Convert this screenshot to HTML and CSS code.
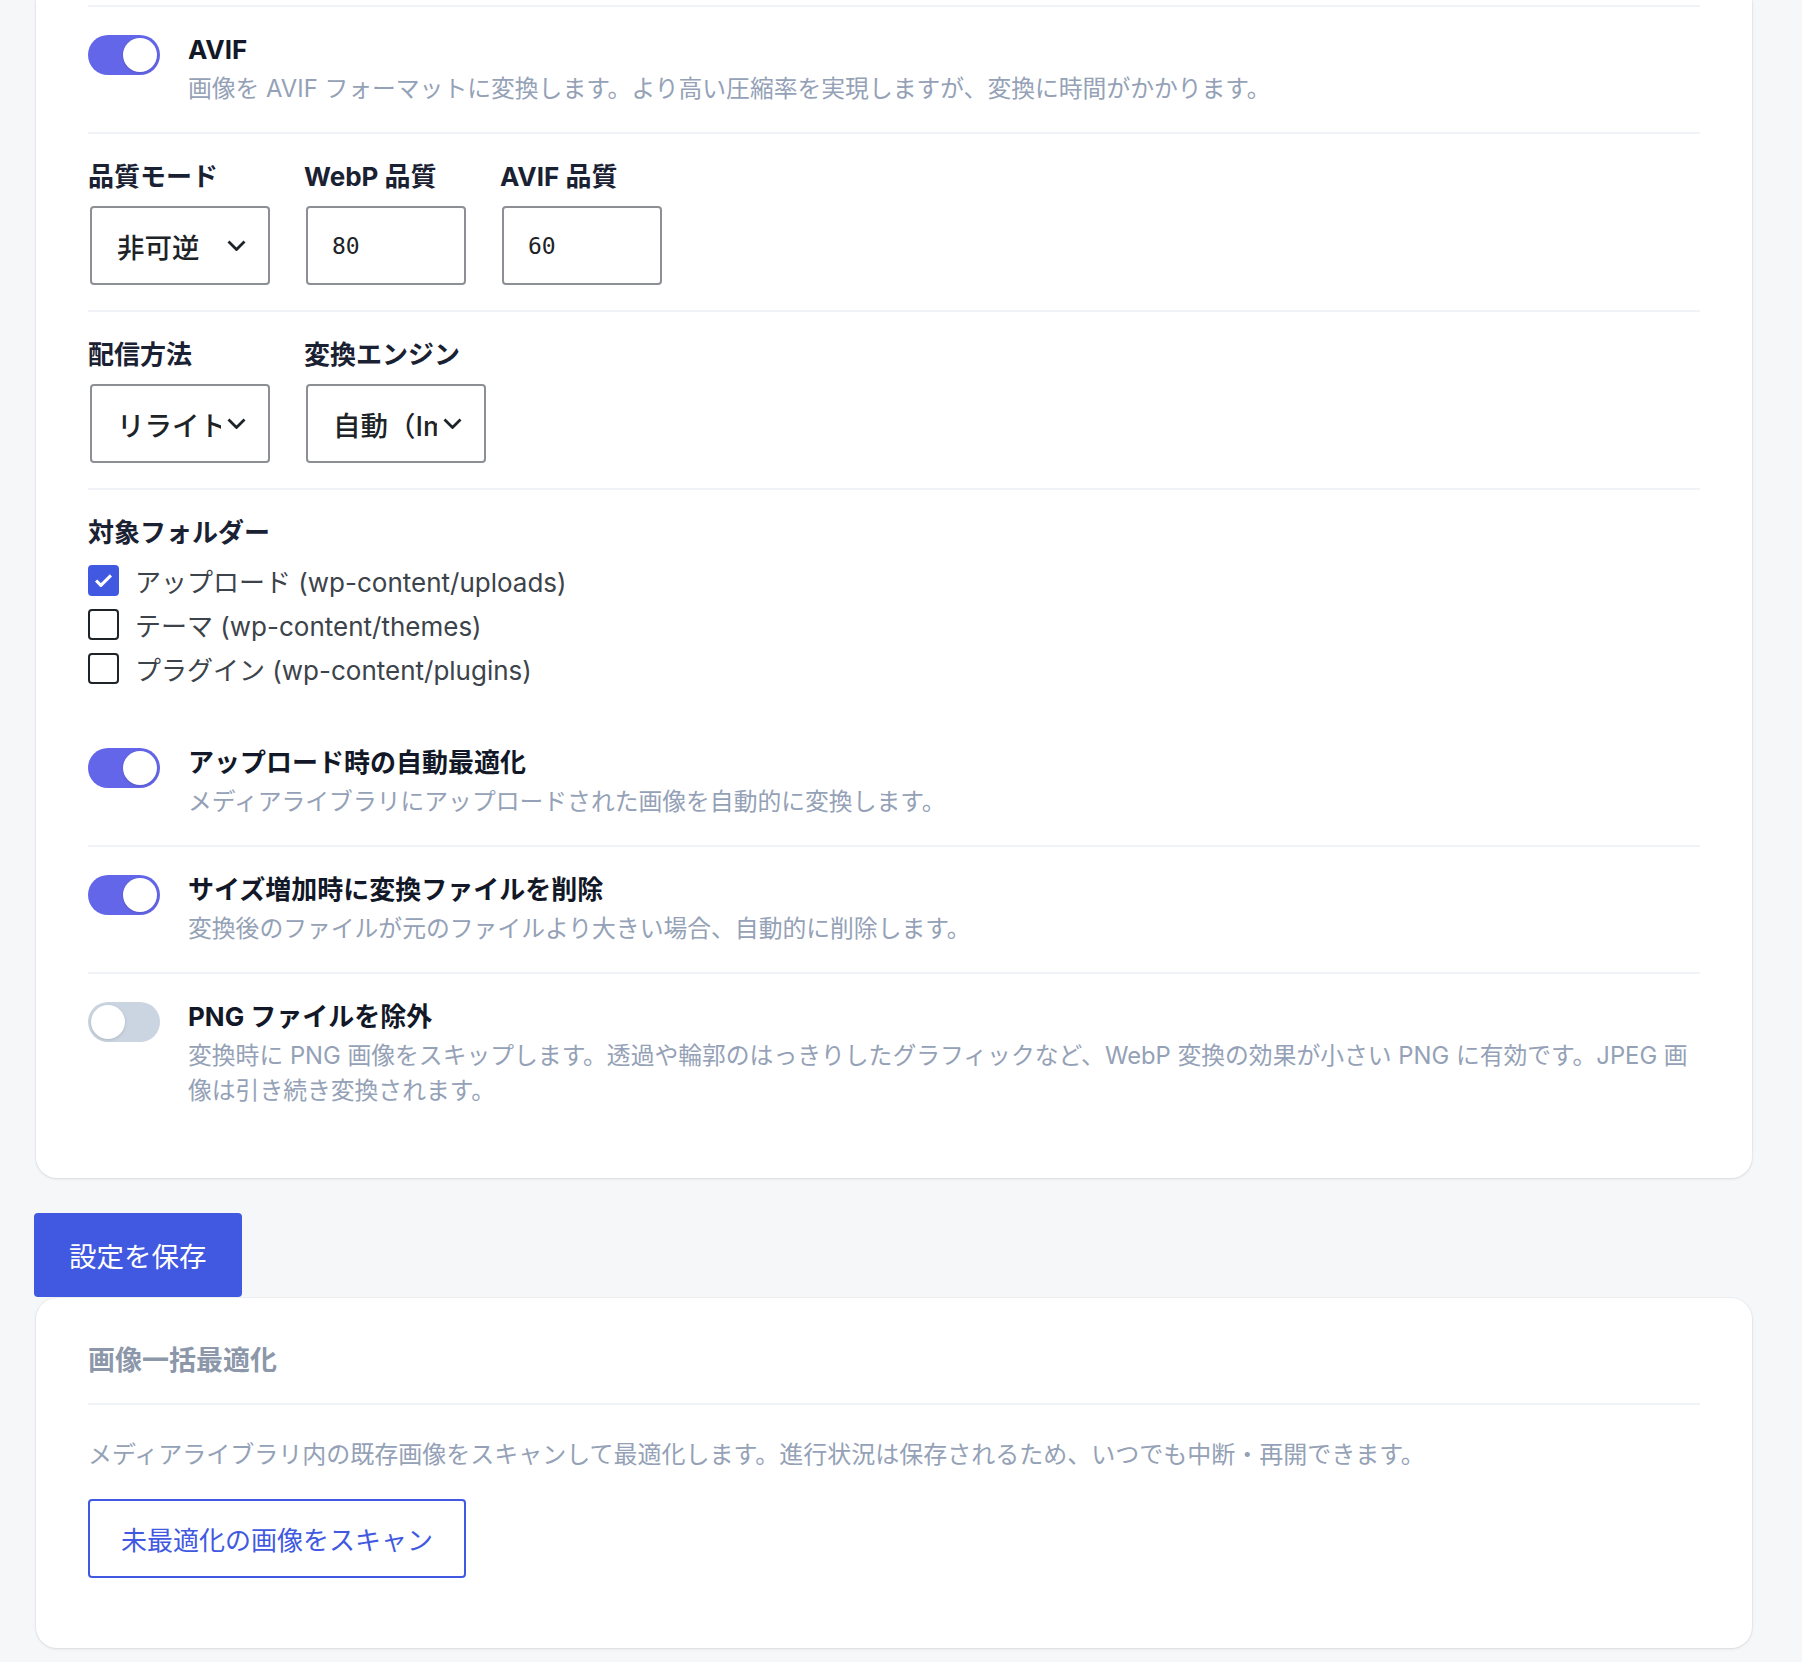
FILE: index.html
```html
<!DOCTYPE html>
<html lang="ja">
<head>
    <meta charset="UTF-8">
    <meta name="viewport" content="width=device-width, initial-scale=1.0">
    <title>画像最適化 設定</title>
    <link rel="stylesheet" href="styles.css">
</head>
<body>
    <div class="wrap">
        <form class="settings-form">
            <div class="card card-settings">
                <div class="settings-list">
                    <div class="setting">
                        <span class="toggle on"><span class="knob"></span></span>
                        <div class="setting-text">
                            <div class="setting-title">AVIF</div>
                            <p class="setting-desc">画像を AVIF フォーマットに変換します。より高い圧縮率を実現しますが、変換に時間がかかります。</p>
                        </div>
                    </div>

                    <div class="fields">
                        <div class="field">
                            <div class="field-label">品質モード</div>
                            <div class="select">
                                <span class="select-value">非可逆</span>
                                <svg class="chevron" viewBox="0 0 19 11"><path d="M1.5 1.5l8 8 8-8"/></svg>
                            </div>
                        </div>
                        <div class="field">
                            <div class="field-label">WebP 品質</div>
                            <input class="num" type="text" value="80">
                        </div>
                        <div class="field">
                            <div class="field-label">AVIF 品質</div>
                            <input class="num" type="text" value="60">
                        </div>
                    </div>

                    <div class="fields">
                        <div class="field">
                            <div class="field-label">配信方法</div>
                            <div class="select">
                                <span class="select-value">リライト（.htaccess）</span>
                                <svg class="chevron" viewBox="0 0 19 11"><path d="M1.5 1.5l8 8 8-8"/></svg>
                            </div>
                        </div>
                        <div class="field">
                            <div class="field-label">変換エンジン</div>
                            <div class="select">
                                <span class="select-value">自動（Imagick）</span>
                                <svg class="chevron" viewBox="0 0 19 11"><path d="M1.5 1.5l8 8 8-8"/></svg>
                            </div>
                        </div>
                    </div>

                    <div class="folders">
                        <div class="field-label">対象フォルダー</div>
                        <ul class="checks">
                            <li class="check">
                                <span class="box checked"><svg viewBox="0 0 31 31"><path d="M7 15.5l5.5 5.5L24 9.5"/></svg></span>
                                アップロード (wp-content/uploads)
                            </li>
                            <li class="check">
                                <span class="box"></span>
                                テーマ (wp-content/themes)
                            </li>
                            <li class="check">
                                <span class="box"></span>
                                プラグイン (wp-content/plugins)
                            </li>
                        </ul>
                    </div>

                    <div class="setting">
                        <span class="toggle on"><span class="knob"></span></span>
                        <div class="setting-text">
                            <div class="setting-title">アップロード時の自動最適化</div>
                            <p class="setting-desc">メディアライブラリにアップロードされた画像を自動的に変換します。</p>
                        </div>
                    </div>

                    <div class="setting">
                        <span class="toggle on"><span class="knob"></span></span>
                        <div class="setting-text">
                            <div class="setting-title">サイズ増加時に変換ファイルを削除</div>
                            <p class="setting-desc">変換後のファイルが元のファイルより大きい場合、自動的に削除します。</p>
                        </div>
                    </div>

                    <div class="setting">
                        <span class="toggle"><span class="knob"></span></span>
                        <div class="setting-text">
                            <div class="setting-title">PNG ファイルを除外</div>
                            <p class="setting-desc">変換時に PNG 画像をスキップします。透過や輪郭のはっきりしたグラフィックなど、WebP 変換の効果が小さい PNG に有効です。JPEG 画像は引き続き変換されます。</p>
                        </div>
                    </div>
                </div>
            </div>

            <button class="save" type="button">設定を保存</button>
        </form>

        <div class="card card-bulk">
            <h2 class="bulk-title">画像一括最適化</h2>
            <p class="bulk-desc">メディアライブラリ内の既存画像をスキャンして最適化します。進行状況は保存されるため、いつでも中断・再開できます。</p>
            <button class="scan" type="button">未最適化の画像をスキャン</button>
        </div>
    </div>
</body>
</html>
```

FILE: styles.css
```css
* {
    box-sizing: border-box;
}
html, body {
    margin: 0;
    padding: 0;
    background: #f6f7f9;
}
body {
    font-family: Inter, "Noto Sans CJK JP", sans-serif;
    color: #151b2b;
}
.wrap {
    padding: 0 50px 15px 34px;
}
.card {
    margin-left: 2px;
    background: #fff;
    border-radius: 21px;
    box-shadow: 0 1px 3px rgba(15, 23, 42, 0.1), 0 0 0 1px rgba(15, 23, 42, 0.03);
    padding: 47px 52px 70px;
}
.card-settings {
    border-radius: 0 0 21px 21px;
    padding: 5px 52px 44px;
}
.settings-list {
    border-top: 2px solid #f0f3f7;
}

/* toggle rows */
.setting {
    display: flex;
    gap: 28px;
    padding: 26px 0;
    border-bottom: 2px solid #f0f3f7;
}
.setting:last-child {
    border-bottom: none;
}
.toggle {
    flex: none;
    display: flex;
    width: 72px;
    height: 40px;
    margin-top: 2px;
    padding: 3px;
    border-radius: 20px;
    background: #cbd5e1;
}
.toggle.on {
    justify-content: flex-end;
    background: #6466e9;
}
.knob {
    width: 34px;
    height: 34px;
    border-radius: 50%;
    background: #fff;
    box-shadow: 0 1px 3px rgba(0, 0, 0, 0.15);
}
.setting-text {
    flex: 1;
}
.setting-title {
    font-size: 26px;
    font-weight: 700;
    line-height: 33px;
    color: #121827;
}
.setting-desc {
    margin: 5px 0 0;
    font-size: 23.8px;
    line-height: 35px;
    color: #94a1b6;
}

/* fields */
.fields {
    display: flex;
    gap: 34px;
    padding: 28px 0 25px;
    border-bottom: 2px solid #f0f3f7;
}
.field-label {
    font-size: 26px;
    font-weight: 700;
    line-height: 30px;
    margin-bottom: 14px;
    color: #1a2132;
    white-space: nowrap;
}
.select {
    display: flex;
    align-items: center;
    width: 180px;
    height: 79px;
    margin-left: 2px;
    padding: 0 22px 0 25px;
    border: 2px solid #8c8f94;
    border-radius: 4px;
    font-size: 27.5px;
    font-weight: 500;
    color: #1d2327;
    background: #fff;
}
.select-value {
    flex: 1;
    overflow: hidden;
    white-space: nowrap;
}
.chevron {
    flex: none;
    width: 19px;
    height: 11px;
    margin-left: 6px;
    fill: none;
    stroke: #1d2327;
    stroke-width: 2.8;
}
.num {
    display: block;
    width: 160px;
    height: 79px;
    margin: 0 0 0 2px;
    padding: 0 24px;
    border: 2px solid #8c8f94;
    border-radius: 4px;
    font: 23px "DejaVu Sans Mono", monospace;
    color: #1d2327;
    background: #fff;
    outline: none;
}

/* folders */
.folders {
    padding: 28px 0 34px;
}
.checks {
    list-style: none;
    margin: 13px 0 0;
    padding: 0;
    display: flex;
    flex-direction: column;
    gap: 8px;
}
.check {
    display: flex;
    align-items: center;
    gap: 16px;
    height: 36px;
    font-size: 26px;
    color: #3c434a;
}
.box {
    flex: none;
    width: 31px;
    height: 31px;
    border: 2px solid #1d2327;
    border-radius: 4px;
}
.box.checked {
    background: #4159e0;
    border-color: #4159e0;
}
.box svg {
    display: block;
    width: 27px;
    height: 27px;
    fill: none;
    stroke: #fff;
    stroke-width: 3.6;
    stroke-linejoin: round;
}

/* buttons */
.save {
    display: block;
    margin: 35px 0 0;
    height: 84px;
    padding: 0 35px;
    border: 0;
    border-radius: 4px;
    background: #4159e0;
    color: #fff;
    font-family: Inter, "Noto Sans CJK JP", sans-serif;
    font-size: 27.5px;
    cursor: pointer;
}
.card-bulk {
    margin-top: 1px;
}
.bulk-title {
    margin: 0;
    padding-bottom: 26px;
    border-bottom: 2px solid #f0f3f7;
    font-size: 27px;
    font-weight: 700;
    line-height: 32px;
    color: #8c97aa;
}
.bulk-desc {
    margin: 32px 0 27px;
    font-size: 24px;
    line-height: 35px;
    color: #94a1b6;
}
.scan {
    display: block;
    height: 79px;
    padding: 0 31px;
    border: 2px solid #4159e0;
    border-radius: 4px;
    background: #fff;
    color: #4159e0;
    font-family: Inter, "Noto Sans CJK JP", sans-serif;
    font-size: 26px;
    cursor: pointer;
}
```
